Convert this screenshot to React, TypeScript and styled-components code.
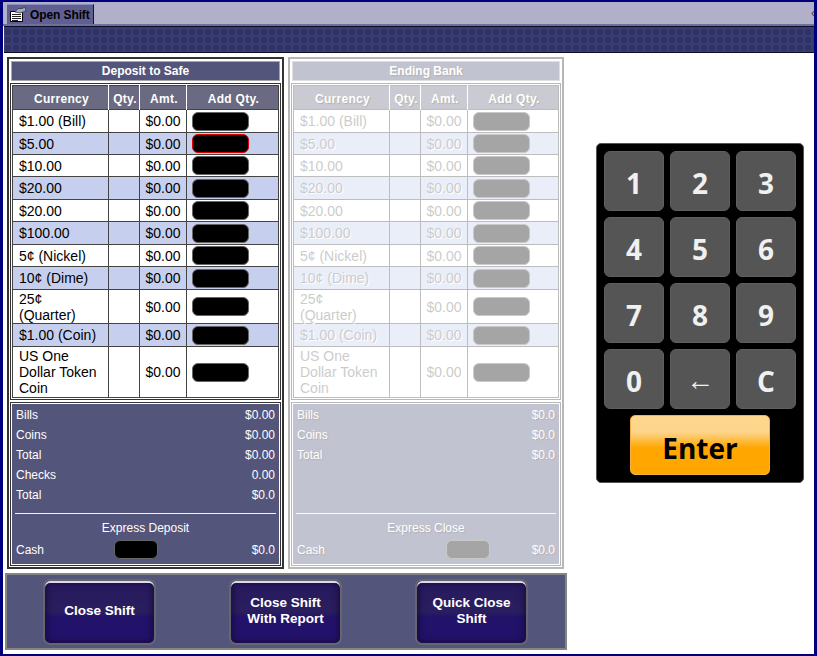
import styled, { createGlobalStyle } from "styled-components";

const GlobalStyle = createGlobalStyle`
  html, body {
    margin: 0;
    padding: 0;
    background: #fff;
  }
  body {
    font-family: "Liberation Sans", Arial, sans-serif;
  }
`;

const bankRows = [
  { name: "$1.00 (Bill)", height: 23 },
  { name: "$5.00", height: 22 },
  { name: "$10.00", height: 22 },
  { name: "$20.00", height: 23 },
  { name: "$20.00", height: 22 },
  { name: "$100.00", height: 23 },
  { name: "5¢ (Nickel)", height: 22 },
  { name: "10¢ (Dime)", height: 23 },
  { name: "25¢ (Quarter)", height: 34 },
  { name: "$1.00 (Coin)", height: 23 },
  { name: "US One Dollar Token Coin", height: 51 },
];

const keys = ["1", "2", "3", "4", "5", "6", "7", "8", "9", "0", "←", "C"];

function TabIcon() {
  return (
    <svg width="18" height="17" viewBox="0 0 18 17">
      <path d="M1.500 5.500h12v10h-12z" fill="#fff" stroke="#000" />
      <path d="M3 8.500h9M3 10.500h9M3 12.500h9M3 14.500h6" stroke="#222" />
      <path d="M6 6l3-3.500h4l3-1.500 1 4-3 1-3 1z" fill="#a4a8ba" stroke="#33384f" strokeWidth="0.8" />
    </svg>
  );
}

function BankPanel({
  title,
  faded,
  selected,
  expressLabel,
  cashOffset,
  totals,
}: {
  title: string;
  faded?: boolean;
  selected?: number;
  expressLabel: string;
  cashOffset: number;
  totals: { label: string; value: string }[];
}) {
  return (
    <Panel $faded={faded}>
      <PanelTitle>{title}</PanelTitle>
      <TableFrame>
        <CurrencyTable>
          <colgroup>
            <col width="96" />
            <col width="31" />
            <col width="47" />
            <col />
          </colgroup>
          <thead>
            <tr>
              <HeadCell>Currency</HeadCell>
              <HeadCell>Qty.</HeadCell>
              <HeadCell>Amt.</HeadCell>
              <HeadCell>Add Qty.</HeadCell>
            </tr>
          </thead>
          <tbody>
            {bankRows.map((row, idx) => (
              <BodyRow key={idx} $alt={idx % 2 === 1} style={{ height: row.height }}>
                <NameCell>{row.name}</NameCell>
                <BodyCell />
                <AmountCell>$0.00</AmountCell>
                <BodyCell>
                  <QtyInput $active={selected === idx} />
                </BodyCell>
              </BodyRow>
            ))}
          </tbody>
        </CurrencyTable>
      </TableFrame>
      <Summary>
        <TotalsList>
          {totals.map((item, idx) => (
            <TotalRow key={idx}>
              <span>{item.label}</span>
              <span>{item.value}</span>
            </TotalRow>
          ))}
        </TotalsList>
        <Divider />
        <ExpressLabel>{expressLabel}</ExpressLabel>
        <CashRow>
          <span>Cash</span>
          <CashInput $offset={cashOffset} />
          <CashValue>$0.0</CashValue>
        </CashRow>
      </Summary>
    </Panel>
  );
}

export default function App() {
  return (
    <>
      <GlobalStyle />
      <Window>
        <TabStrip>
          <Tab>
            <TabIcon />
            <TabLabel>Open Shift</TabLabel>
          </Tab>
          <ScrollMark>‹</ScrollMark>
        </TabStrip>
        <DottedBand />
        <Content>
          <LeftColumn>
            <Panels>
              <BankPanel
                title="Deposit to Safe"
                selected={1}
                expressLabel="Express Deposit"
                cashOffset={70}
                totals={[
                  { label: "Bills", value: "$0.00" },
                  { label: "Coins", value: "$0.00" },
                  { label: "Total", value: "$0.00" },
                  { label: "Checks", value: "0.00" },
                  { label: "Total", value: "$0.0" },
                ]}
              />
              <BankPanel
                title="Ending Bank"
                faded
                expressLabel="Express Close"
                cashOffset={121}
                totals={[
                  { label: "Bills", value: "$0.0" },
                  { label: "Coins", value: "$0.0" },
                  { label: "Total", value: "$0.0" },
                ]}
              />
            </Panels>
            <ActionBar>
              <ActionButton>Close Shift</ActionButton>
              <ActionButton>
                Close Shift
                <br />
                With Report
              </ActionButton>
              <ActionButton>
                Quick Close
                <br />
                Shift
              </ActionButton>
            </ActionBar>
          </LeftColumn>
          <KeypadArea>
            <Keypad>
              <KeyGrid>
                {keys.map((k) => (
                  <Key key={k} $thin={k === "←"}>
                    {k}
                  </Key>
                ))}
              </KeyGrid>
              <EnterButton>Enter</EnterButton>
            </Keypad>
          </KeypadArea>
        </Content>
      </Window>
    </>
  );
}

const Window = styled.div`
  box-sizing: border-box;
  width: 817px;
  height: 656px;
  overflow: hidden;
  background: #fff;
  border-style: solid;
  border-color: #00007f;
  border-width: 2px 3px 2px 3px;
`;

const TabStrip = styled.div`
  box-sizing: border-box;
  height: 24px;
  padding: 2px 0 0 4px;
  display: flex;
  justify-content: space-between;
  background: #b0b0cb;
  border-bottom: 2px solid #6f6f9b;
`;

const Tab = styled.div`
  box-sizing: border-box;
  width: 87px;
  height: 20px;
  padding-left: 2px;
  display: flex;
  align-items: center;
  gap: 3px;
  background: #5f5f94;
  border-top: 1px solid #8d8db5;
  border-right: 1px solid #14143a;
`;

const TabLabel = styled.span`
  font-family: "Liberation Sans", sans-serif;
  font-size: 12px;
  font-weight: 700;
  letter-spacing: -0.1px;
  color: #000;
  white-space: nowrap;
`;

const ScrollMark = styled.span`
  font-size: 12px;
  line-height: 18px;
  color: #444;
  margin-right: -1px;
`;

const DottedBand = styled.div`
  box-sizing: border-box;
  height: 27px;
  margin-left: 1px;
  background-color: #393d75;
  background-image: radial-gradient(circle at center, #2e3264 0, #2e3264 3px, transparent 3.6px);
  background-size: 8px 8px;
  background-position: 0 1px;
  border-top: 1px solid #0c0c20;
  border-bottom: 1px solid #0c0c20;
`;

const Content = styled.div`
  display: flex;
`;

const LeftColumn = styled.div`
  width: 562px;
  margin-left: 2px;
  display: flex;
  flex-direction: column;
`;

const Panels = styled.div`
  display: grid;
  grid-template-columns: 277px 276px;
  gap: 4px;
  padding: 4px 0 0 2px;
`;

const Panel = styled.section<{ $faded?: boolean }>`
  box-sizing: border-box;
  height: 512px;
  padding: 2px 1px 1px;
  display: flex;
  flex-direction: column;
  border: 2px solid #333;
  background: #fff;
  opacity: ${(p) => (p.$faded ? 0.35 : 1)};

  ${(p) =>
    p.$faded &&
    `
    --ink: #6d6d6d;
    --soft-shadow: 1px 1px 0 #fff;
    --edge: 1px 1px 1px #222;
  `}
`;

const PanelTitle = styled.h2`
  box-sizing: border-box;
  margin: 0 1px;
  height: 20px;
  line-height: 18px;
  text-align: center;
  font-size: 12px;
  font-weight: 700;
  color: #fff;
  text-shadow: var(--edge, none);
  background: #54557a;
  border: 1px solid #a5a5a5;
`;

const TableFrame = styled.div`
  margin-top: 2px;
  padding: 1px;
  border: 1px solid #333;
`;

const CurrencyTable = styled.table`
  width: 100%;
  table-layout: fixed;
  border-collapse: collapse;
  border: 1px solid #444;
`;

const HeadCell = styled.th`
  height: 21px;
  padding: 2px 0 0 2px;
  font-size: 12px;
  font-weight: 700;
  letter-spacing: 0.3px;
  color: #fff;
  text-align: center;
  text-shadow: var(--edge, none);
  background: #6a6a82;
  border-left: 1px solid #fff;
  &:first-child {
    border-left: none;
  }
`;

const BodyRow = styled.tr<{ $alt: boolean }>`
  background: ${(p) => (p.$alt ? "#c6d0ee" : "#fff")};
`;

const BodyCell = styled.td`
  padding: 0 5px;
  border: 1px solid #444;
  font-size: 14px;
  line-height: 16px;
  color: var(--ink, #000);
  text-shadow: var(--soft-shadow, none);
`;

const NameCell = styled(BodyCell)`
  padding: 0 6px;
`;

const AmountCell = styled(BodyCell)`
  text-align: center;
  padding: 0;
`;

const QtyInput = styled.div<{ $active: boolean }>`
  box-sizing: border-box;
  width: 57px;
  height: 19px;
  background: #000;
  border-radius: 6px;
  border: 1px solid ${(p) => (p.$active ? "#e00000" : "#666")};
`;

const Summary = styled.div`
  box-sizing: border-box;
  flex: 1;
  margin-top: 2px;
  padding: 1px;
  display: flex;
  flex-direction: column;
  color: #fff;
  font-size: 12px;
  text-shadow: var(--edge, none);
  background: #54557a;
  border: 1px solid #333;
  box-shadow: inset 0 0 0 1px #fff;
`;

const TotalsList = styled.div`
  height: 108px;
  padding: 1px 4px 0;
`;

const TotalRow = styled.div`
  height: 20px;
  line-height: 20px;
  display: flex;
  justify-content: space-between;
`;

const Divider = styled.div`
  height: 1px;
  margin: 0 3px;
  background: #f2f2f6;
`;

const ExpressLabel = styled.div`
  margin-top: 7px;
  text-align: center;
  line-height: 14px;
`;

const CashRow = styled.div`
  margin-top: 5px;
  padding: 0 4px;
  display: flex;
  align-items: center;
`;

const CashInput = styled.div<{ $offset: number }>`
  box-sizing: border-box;
  width: 44px;
  height: 19px;
  margin-left: ${(p) => p.$offset}px;
  background: #000;
  border: 1px solid #666;
  border-radius: 6px;
`;

const CashValue = styled.span`
  margin-left: auto;
`;

const ActionBar = styled.div`
  box-sizing: border-box;
  height: 77px;
  margin-top: 4px;
  display: flex;
  align-items: center;
  gap: 73px;
  padding-left: 36px;
  background: #54557a;
  border: 2px solid #858585;
`;

const ActionButton = styled.button`
  box-sizing: border-box;
  width: 113px;
  height: 66px;
  padding: 0 0 1px;
  font-family: "Liberation Sans", sans-serif;
  font-size: 13.5px;
  font-weight: 700;
  line-height: 16px;
  color: #fff;
  text-align: center;
  border: 2px solid #66666e;
  border-radius: 7px;
  box-shadow: inset 0 2px 0 #dcd8ee, inset 0 0 7px 1px #140a38;
  background: linear-gradient(#27185f 0, #2a1f5e 50%, #22126a 58%, #24126c 100%);
`;

const KeypadArea = styled.div`
  padding: 90px 0 0 29px;
`;

const Keypad = styled.div`
  box-sizing: border-box;
  width: 208px;
  height: 340px;
  padding: 7px;
  background: #000;
  border: 1px solid #555;
  border-radius: 5px;
  display: flex;
  flex-direction: column;
  align-items: center;
`;

const KeyGrid = styled.div`
  display: grid;
  grid-template-columns: repeat(3, 60px);
  grid-auto-rows: 60px;
  gap: 6px;
`;

const Key = styled.div<{ $thin: boolean }>`
  box-sizing: border-box;
  padding-top: ${(p) => (p.$thin ? 0 : 4)}px;
  display: flex;
  align-items: center;
  justify-content: center;
  font-family: "Open Sans", sans-serif;
  font-size: 28px;
  font-weight: ${(p) => (p.$thin ? 400 : 700)};
  color: #f0f0f0;
  background: #555;
  border: 1px solid #5f5f5f;
  border-radius: 6px;
`;

const EnterButton = styled.div`
  box-sizing: border-box;
  width: 140px;
  height: 60px;
  margin-top: 6px;
  padding-top: 5px;
  display: flex;
  align-items: center;
  justify-content: center;
  font-family: "Open Sans", sans-serif;
  font-size: 28px;
  font-weight: 700;
  color: #000;
  border-radius: 5px;
  border: 1px solid #f5b040;
  background: linear-gradient(#fed68d 0, #fdd58b 28%, #ffa600 55%, #ffa600 100%);
`;
